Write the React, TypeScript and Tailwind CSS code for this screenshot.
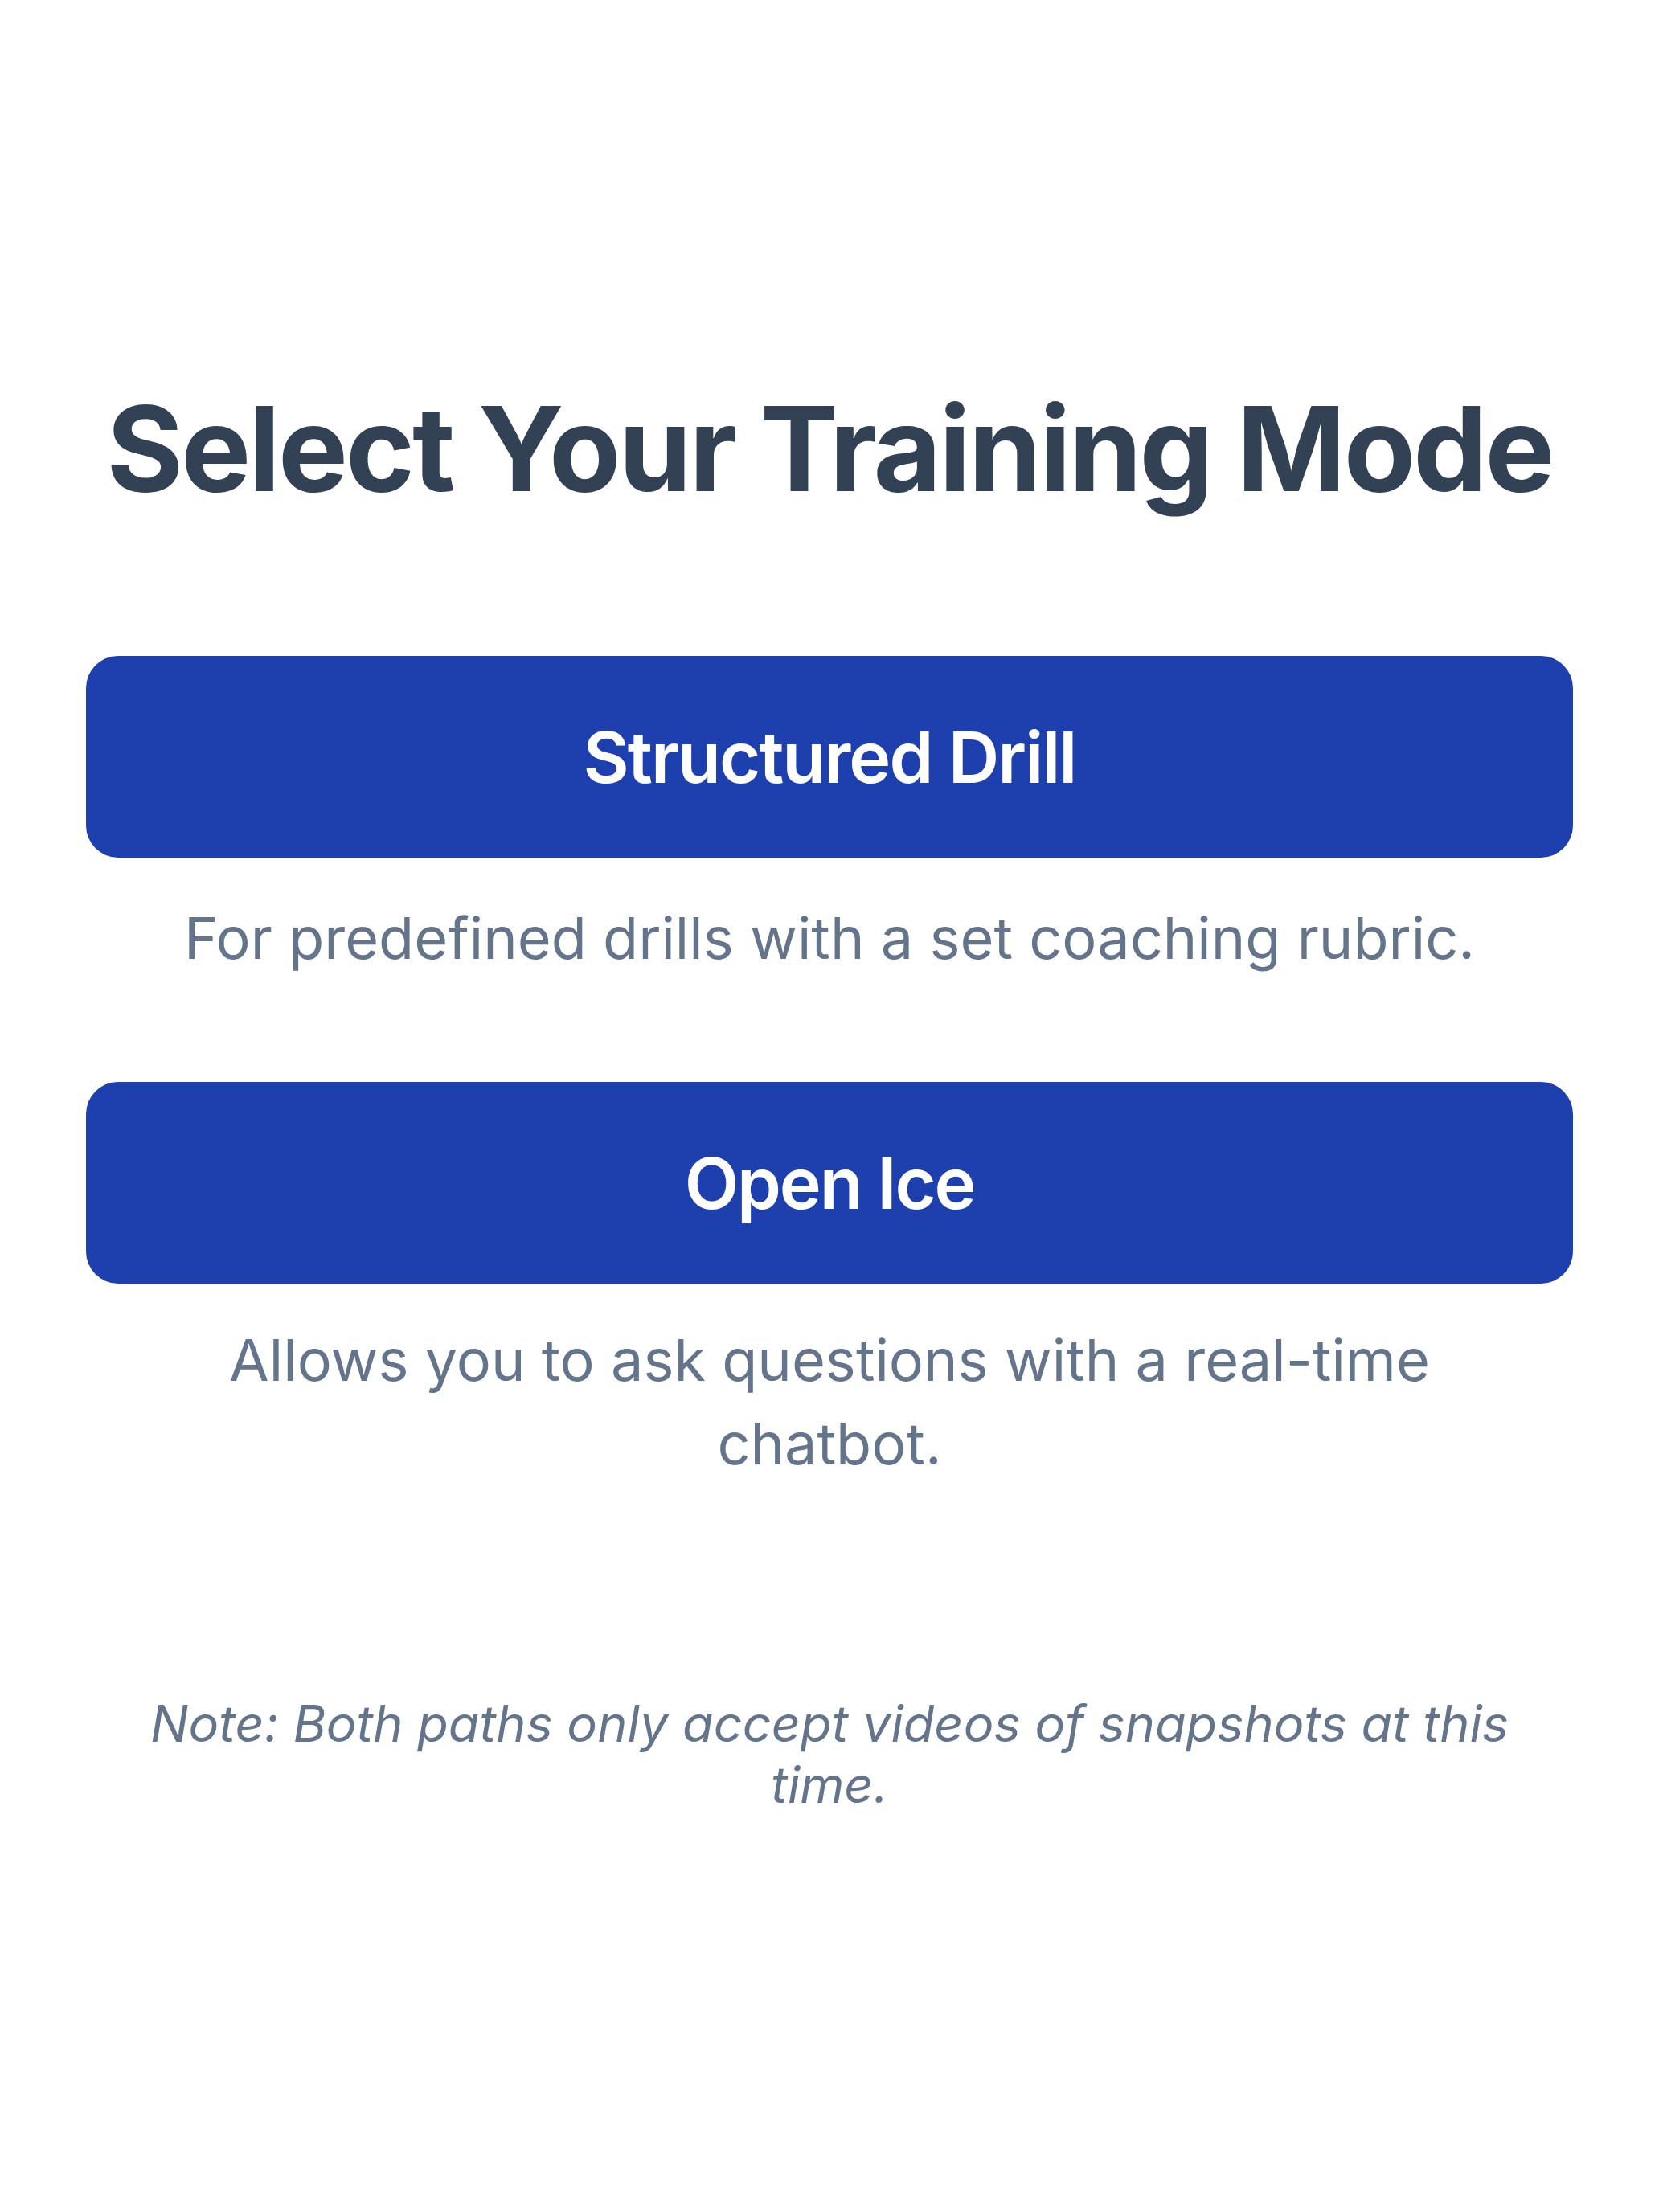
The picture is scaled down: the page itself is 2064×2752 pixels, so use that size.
export default function App() {
  return (
    <div className="min-h-screen bg-white font-['Inter','Noto_Sans',sans-serif] flex flex-col items-center px-[107px] pt-[485px]">
      {/* Title */}
      <h1 className="text-[146px] leading-none font-bold tracking-[-0.02em] text-[#334155] text-center whitespace-nowrap">
        Select Your Training Mode
      </h1>

      {/* Modes */}
      <button className="mt-[185px] w-full h-[251px] rounded-[40px] bg-[#1e40af] flex items-center justify-center text-white text-[88px] leading-none font-semibold tracking-[-0.022em]">
        Structured Drill
      </button>
      <p className="mt-[48px] text-[72px] leading-[104px] text-[#64748b] text-center">
        For predefined drills with a set coaching rubric.
      </p>

      <button className="mt-[127px] w-full h-[251px] rounded-[40px] bg-[#1e40af] flex items-center justify-center text-white text-[88px] leading-none font-semibold tracking-[-0.025em]">
        Open Ice
      </button>
      <p className="mt-[43px] max-w-[1700px] text-[72px] leading-[104px] text-[#64748b] text-center">
        Allows you to ask questions with a real-time chatbot.
      </p>

      {/* Note */}
      <p className="mt-[258px] max-w-[1760px] text-[63px] leading-[76px] italic text-[#64748b] text-center">
        Note: Both paths only accept videos of snapshots at this time.
      </p>
    </div>
  );
}
